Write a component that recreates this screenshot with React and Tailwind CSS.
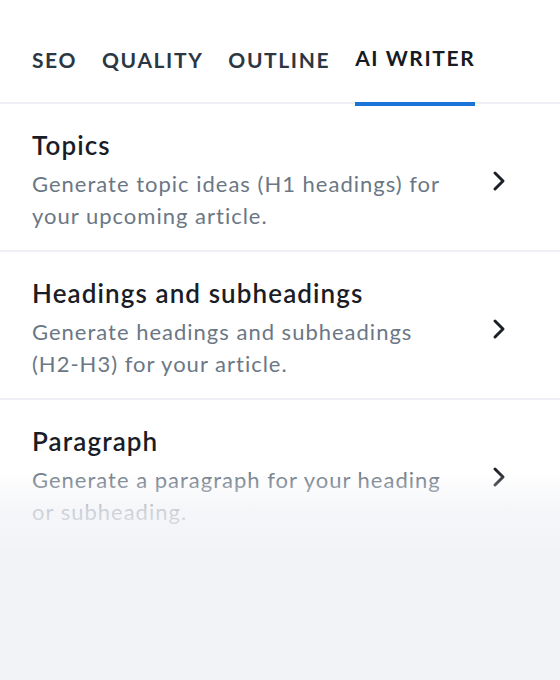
import React, { useState } from "react";

const tabs = ["SEO", "QUALITY", "OUTLINE", "AI WRITER"];

const items = [
  {
    title: "Topics",
    text: "Generate topic ideas (H1 headings) for your upcoming article.",
  },
  {
    title: "Headings and subheadings",
    text: "Generate headings and subheadings (H2-H3) for your article.",
  },
  {
    title: "Paragraph",
    text: "Generate a paragraph for your heading or subheading.",
  },
];

function Chevron() {
  return (
    <svg width="14" height="22" viewBox="0 0 14 22" fill="none" className="shrink-0">
      <polyline
        points="3,3 11,11 3,19"
        stroke="#1b1f27"
        strokeWidth="3"
        strokeLinecap="round"
        strokeLinejoin="round"
      />
    </svg>
  );
}

export default function App() {
  const [active, setActive] = useState(3);

  return (
    <div className="relative w-[560px] h-[680px] bg-[#f2f3f7] overflow-hidden font-['Lato',sans-serif]">
      <div className="bg-white">
        <div className="flex gap-[25px] px-8 h-[104px] border-b-2 border-[#efeff5]">
          {tabs.map((t, i) => (
            <button
              key={t}
              onClick={() => setActive(i)}
              className={
                i === active
                  ? "h-[106px] -mb-[2px] pt-[44px] text-[21px] font-bold tracking-[1.6px] leading-[30px] text-[#161a22] border-b-4 border-[#1a73d9] px-0 self-start"
                  : "h-[106px] -mb-[2px] pt-[44px] text-[21px] font-bold tracking-[1.6px] leading-[30px] text-[#2b3843] px-0 self-start"
              }
            >
              <span className="block -mt-[30px]">{t}</span>
            </button>
          ))}
        </div>

        {items.map((item, i) => (
          <div
            key={item.title}
            className={
              i < items.length - 1
                ? "flex items-center pl-8 pr-[54px] pt-[25px] pb-[18px] border-b-2 border-[#efeff5]"
                : "flex items-center pl-8 pr-[54px] pt-[25px] pb-[18px]"
            }
          >
            <div className="w-[428px]">
              <div className="text-[26px] leading-[32px] font-semibold tracking-[1.1px] text-[#1a1d26]">
                {item.title}
              </div>
              <div className="mt-[7px] text-[22px] leading-[32px] tracking-[1px] text-[#6b7785]">
                {item.text}
              </div>
            </div>
            <div className="flex-1 flex justify-end">
              <Chevron />
            </div>
          </div>
        ))}
      </div>

      <div className="pointer-events-none absolute left-0 right-0 top-[470px] h-[90px] bg-gradient-to-b from-[#f2f3f700] via-[#f2f3f7b8] via-45% to-[#f2f3f7]" />
    </div>
  );
}
